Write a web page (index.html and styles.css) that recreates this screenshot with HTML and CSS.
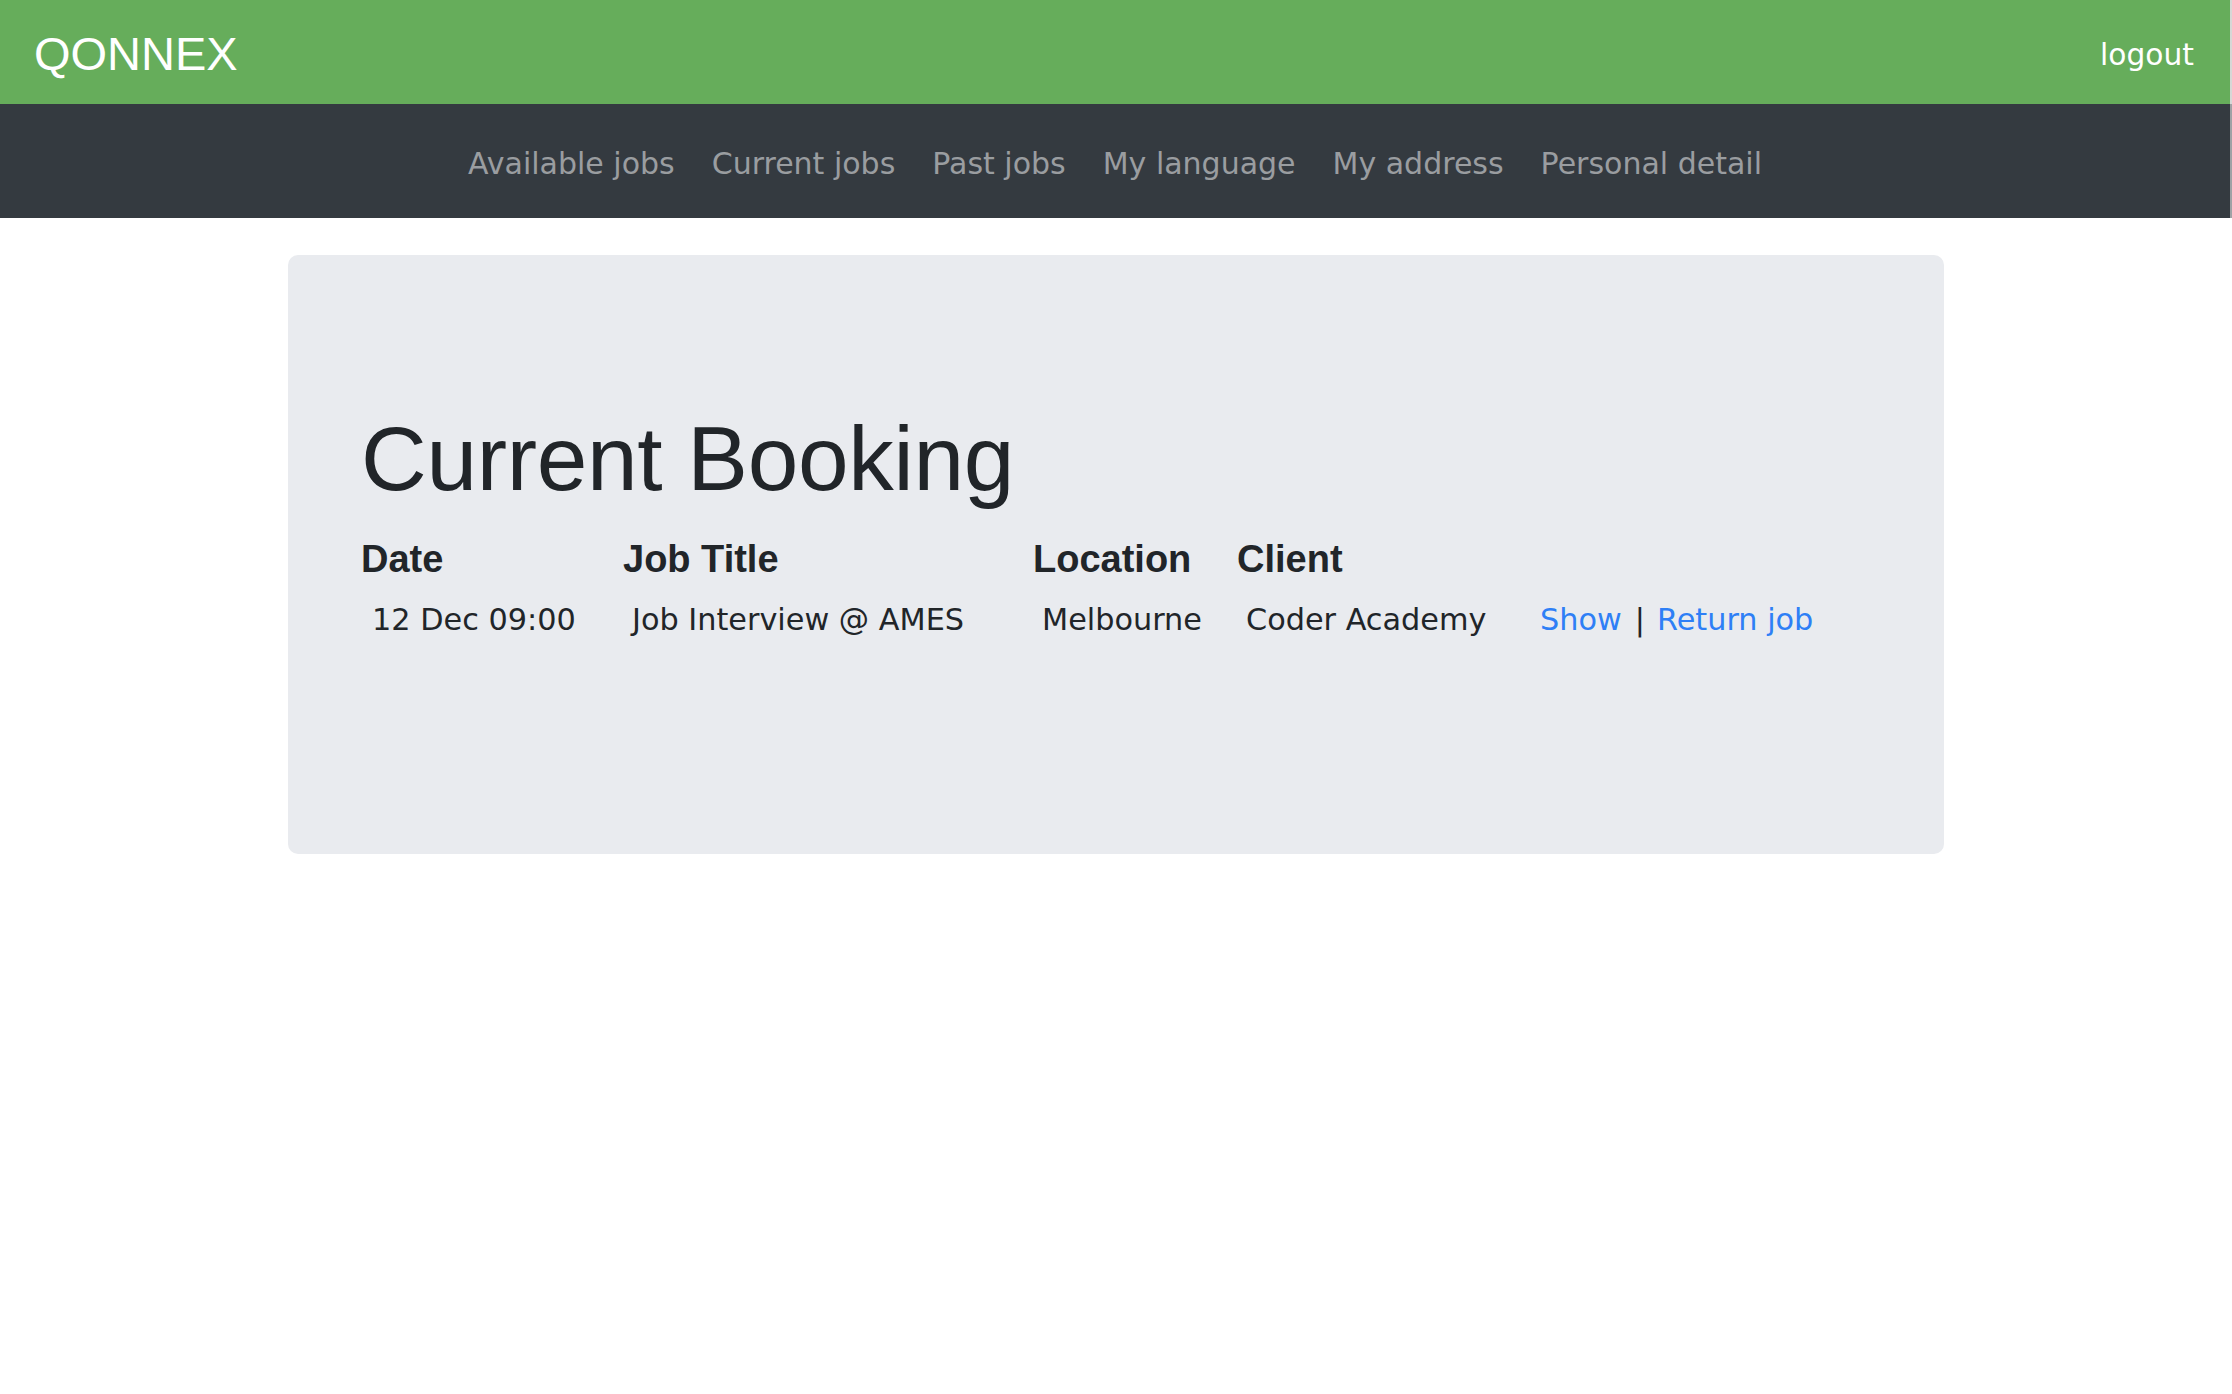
FILE: index.html
```html
<!DOCTYPE html>
<html lang="en">
<head>
<meta charset="utf-8">
<title>QONNEX - Current Booking</title>
<link rel="stylesheet" href="styles.css">
</head>
<body>
<header class="topbar">
  <a class="brand" href="#">QONNEX</a>
  <a class="logout" href="#">logout</a>
</header>
<nav class="mainnav">
  <a class="nav-link" href="#">Available jobs</a>
  <a class="nav-link" href="#">Current jobs</a>
  <a class="nav-link" href="#">Past jobs</a>
  <a class="nav-link" href="#">My language</a>
  <a class="nav-link" href="#">My address</a>
  <a class="nav-link" href="#">Personal detail</a>
</nav>
<main class="page">
  <section class="jumbo">
    <h1 class="title">Current Booking</h1>
    <table class="bookings">
      <colgroup>
        <col class="col-date">
        <col class="col-title">
        <col class="col-loc">
        <col class="col-client">
        <col class="col-actions">
      </colgroup>
      <thead>
        <tr>
          <th>Date</th>
          <th>Job Title</th>
          <th>Location</th>
          <th>Client</th>
          <th></th>
        </tr>
      </thead>
      <tbody>
        <tr>
          <td class="first">12 Dec 09:00</td>
          <td>Job Interview @ AMES</td>
          <td>Melbourne</td>
          <td>Coder Academy</td>
          <td><a class="link" href="#">Show</a><span class="sep">|</span><a class="link" href="#">Return job</a></td>
        </tr>
      </tbody>
    </table>
  </section>
</main>
</body>
</html>
```

FILE: styles.css
```css
html, body {
  margin: 0;
  padding: 0;
  background: #ffffff;
}

body {
  font-family: "DejaVu Sans", sans-serif;
  color: #212529;
}

a {
  text-decoration: none;
}

.topbar {
  box-sizing: border-box;
  height: 104px;
  background: #66ad5b;
  display: flex;
  align-items: center;
  justify-content: space-between;
  padding: 5px 36px 0 34px;
  border-right: 2px solid #d6d8d6;
}

.brand {
  font-family: "Liberation Sans", Arial, sans-serif;
  font-size: 47px;
  line-height: 1.2;
  color: #ffffff;
}

.logout {
  font-family: "DejaVu Sans", sans-serif;
  font-size: 29.7px;
  line-height: 1.2;
  color: #ffffff;
}

.mainnav {
  box-sizing: border-box;
  height: 114px;
  background: #343a40;
  display: flex;
  align-items: center;
  justify-content: center;
  gap: 37px;
  padding: 5px 0 0 0;
  border-right: 2px solid #9fa2a5;
}

.nav-link {
  font-size: 30px;
  line-height: 1.2;
  color: #9a9da0;
}

.page {
  padding-top: 37px;
}

.jumbo {
  width: 1656px;
  margin: 0 auto;
  box-sizing: border-box;
  background: #e9ebef;
  border-radius: 10px;
  padding: 149px 73px 216px 73px;
}

.title {
  margin: 0;
  font-family: "Liberation Sans", Arial, sans-serif;
  font-weight: 400;
  font-size: 91px;
  line-height: 109px;
  letter-spacing: -0.3px;
  color: #212529;
}

.bookings {
  margin-top: 24px;
  border-collapse: collapse;
  table-layout: fixed;
  width: 1510px;
}

.col-date { width: 262px; }
.col-title { width: 410px; }
.col-loc { width: 204px; }
.col-client { width: 294px; }
.col-actions { width: 340px; }

.bookings th {
  padding: 0;
  text-align: left;
  font-family: "Liberation Sans", Arial, sans-serif;
  font-weight: 700;
  font-size: 38px;
  line-height: 44px;
  color: #212529;
}

.bookings td {
  padding: 21px 0 0 9px;
  font-family: "DejaVu Sans", sans-serif;
  font-size: 30.3px;
  line-height: 36px;
  color: #212529;
  white-space: nowrap;
}

.bookings td.first {
  padding-left: 11px;
}

.sep {
  margin: 0 12px 0 13px;
}

.link {
  color: #2e7ff6;
}
```
